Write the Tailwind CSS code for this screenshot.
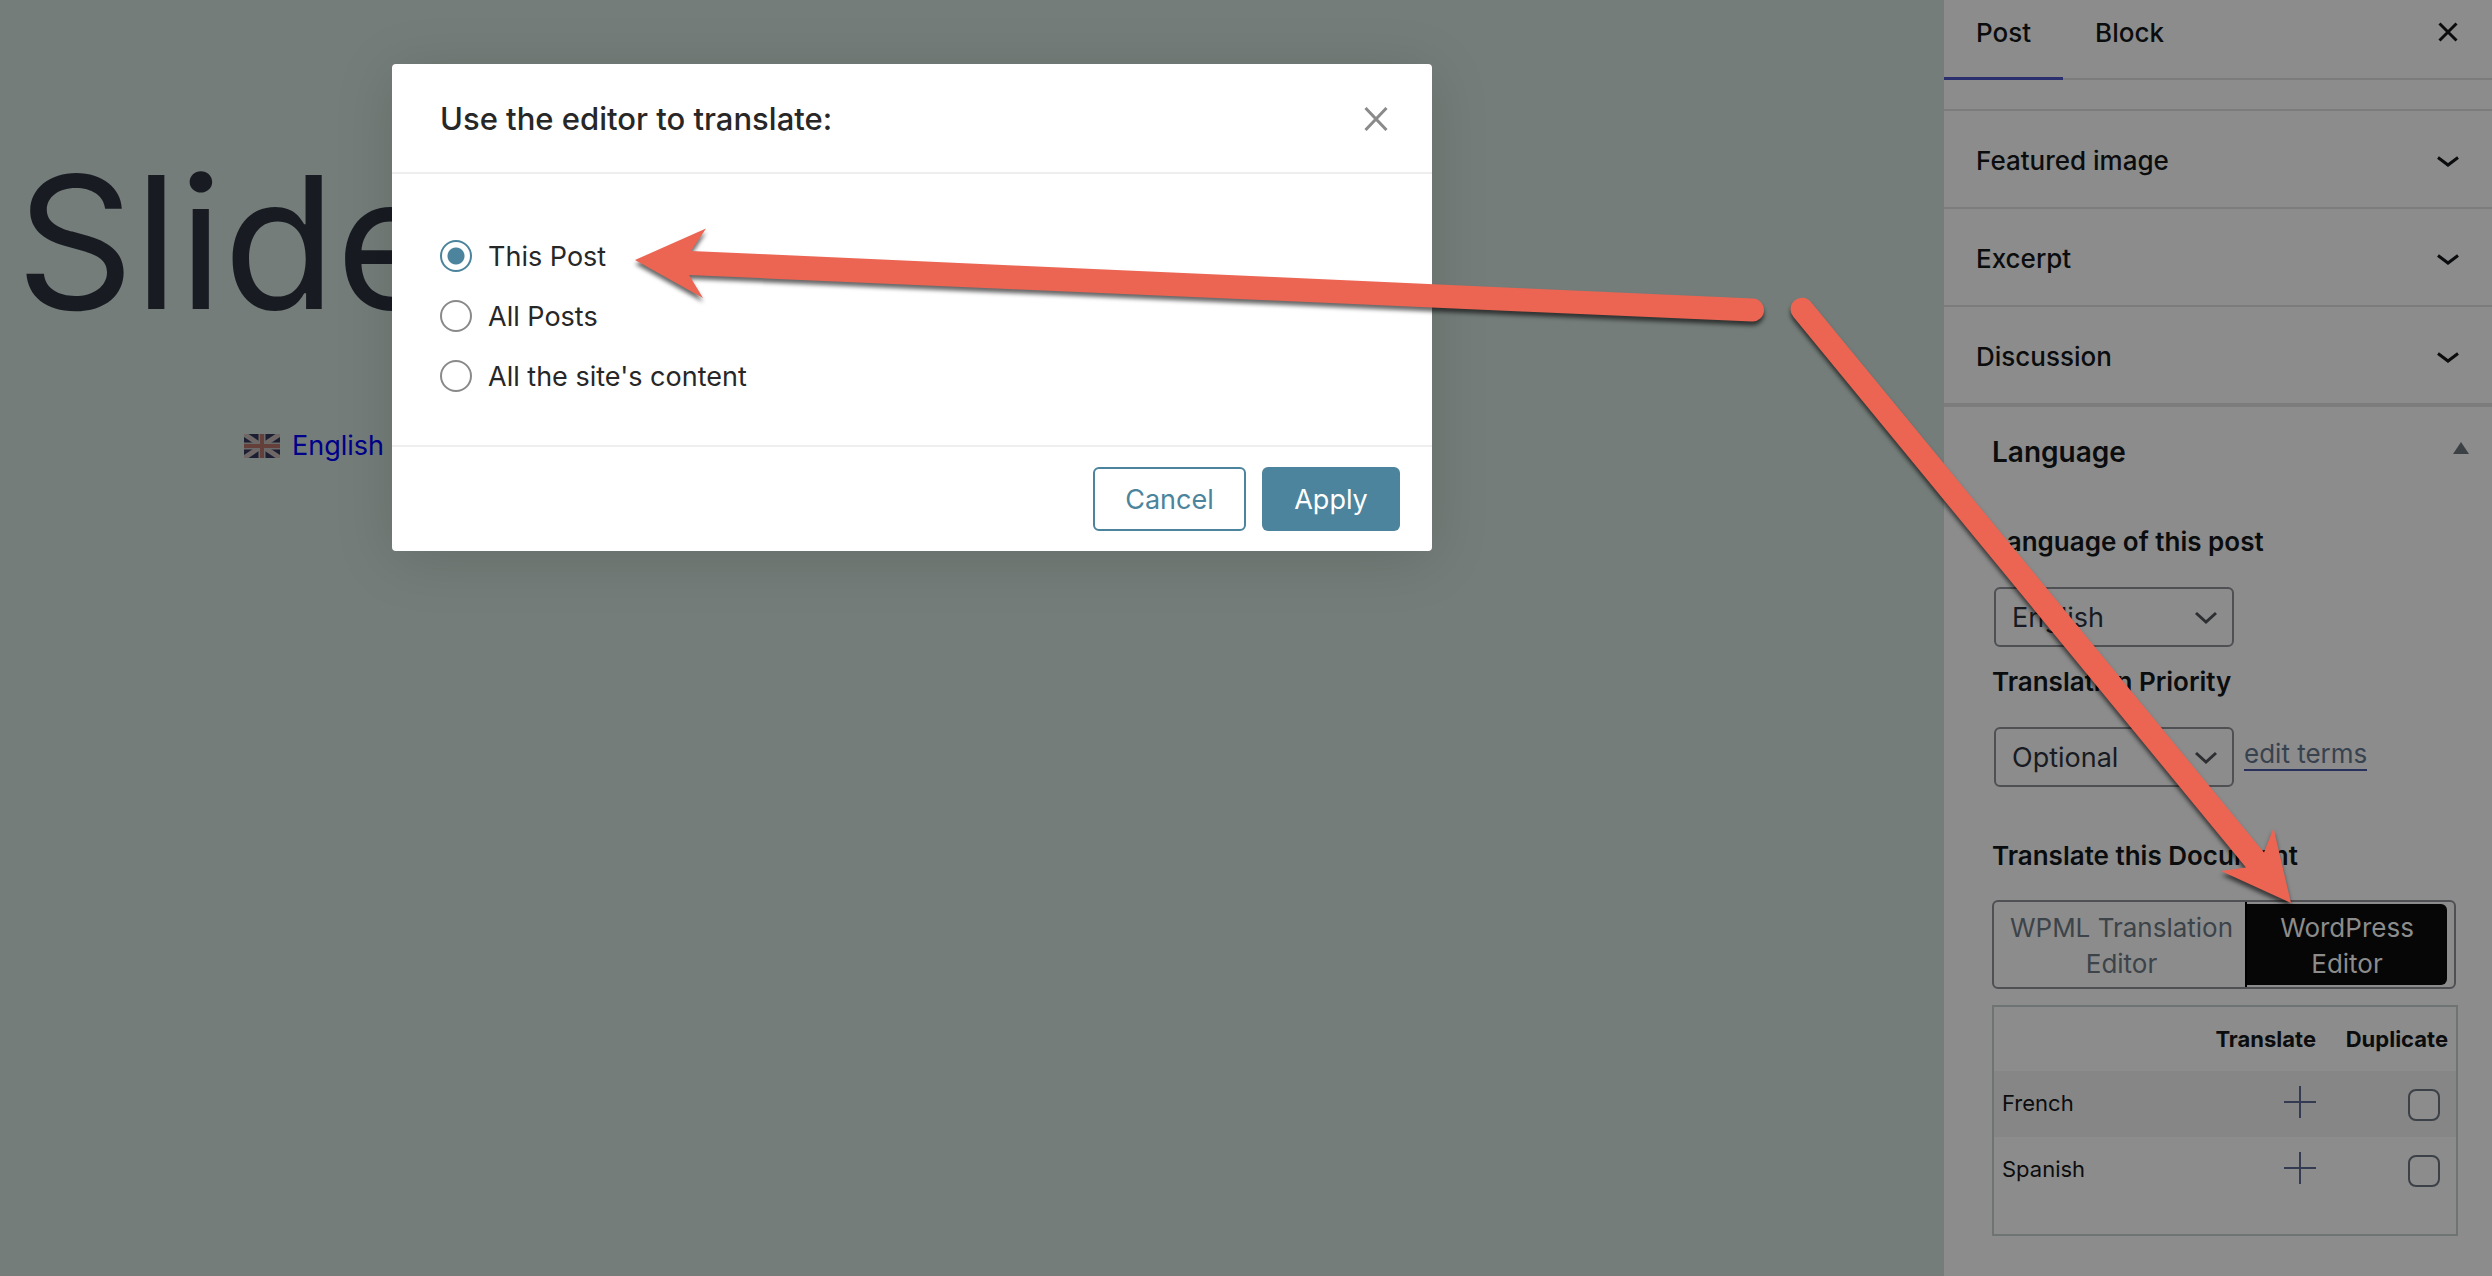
<!DOCTYPE html>
<html lang="en">
<head>
<meta charset="utf-8">
<title>Edit Post</title>
<script src="https://cdn.jsdelivr.net/npm/@tailwindcss/browser@4"></script>
</head>
<body class="relative flex min-h-screen overflow-x-hidden bg-[#747d79] font-[Inter,sans-serif] text-[#0b0c0e]">

<!-- Editor canvas -->
<main class="min-w-0 flex-1 pt-[130px]">
  <h1 class="pl-4 text-[184px] leading-[224px] text-[#181b22]">Slide</h1>
  <a href="#" class="mt-[72px] ml-[244px] flex w-fit items-center gap-3 text-[27px] leading-10 text-[#00008a]">
    <svg class="h-6 w-9" viewBox="0 0 36 24" aria-hidden="true">
      <rect width="36" height="24" fill="#1e1e32"/>
      <path d="M0 0L36 24M36 0L0 24" stroke="#6a6a6a" stroke-width="5"/>
      <path d="M0 0L36 24M36 0L0 24" stroke="#80605a" stroke-width="1"/>
      <path d="M18 0V24M0 12H36" stroke="#6a6a6a" stroke-width="7"/>
      <path d="M18 0V24M0 12H36" stroke="#653f3a" stroke-width="4"/>
    </svg>
    English
  </a>
</main>

<!-- Settings sidebar -->
<aside class="w-[548px] shrink-0 bg-[#8c8c8c]">
  <div class="flex h-20 border-b-2 border-[#7c7c7c] text-[26px] font-medium">
    <button class="-mb-[2px] h-20 border-b-[3px] border-[#2b2f6e] px-8 pb-3">Post</button>
    <button class="h-[78px] px-8 pb-[13px]">Block</button>
    <button class="mr-[34px] ml-auto pb-[14px]" aria-label="Close settings">
      <svg class="size-5" viewBox="0 0 20 20" fill="none" stroke="#0b0c0e" stroke-width="3"><path d="M1.500 1.500L18.500 18.500M18.500 1.500L1.500 18.500"/></svg>
    </button>
  </div>
  <div class="mt-[29px] text-[26px] font-medium">
    <button class="flex h-[98px] w-full items-center justify-between border-t-2 border-[#7c7c7c] pt-[2px] pr-8 pl-8">Featured image
      <svg class="mt-1 h-3 w-6" viewBox="0 0 24 12" fill="none" stroke="#0b0c0e" stroke-width="3"><path d="M2 1.500L12 9L22 1.500"/></svg></button>
    <button class="flex h-[98px] w-full items-center justify-between border-t-2 border-[#7c7c7c] pt-[2px] pr-8 pl-8">Excerpt
      <svg class="mt-1 h-3 w-6" viewBox="0 0 24 12" fill="none" stroke="#0b0c0e" stroke-width="3"><path d="M2 1.500L12 9L22 1.500"/></svg></button>
    <button class="flex h-[98px] w-full items-center justify-between border-t-2 border-[#7c7c7c] pt-[2px] pr-8 pl-8">Discussion
      <svg class="mt-1 h-3 w-6" viewBox="0 0 24 12" fill="none" stroke="#0b0c0e" stroke-width="3"><path d="M2 1.500L12 9L22 1.500"/></svg></button>
  </div>
  <section class="border-t-4 border-[#7c7c7c] pr-[34px] pl-12">
    <h2><button class="flex h-[90px] w-full items-center justify-between text-[28px] font-semibold">Language
      <svg class="-mr-[11px] mb-2 h-3 w-4" viewBox="0 0 16 12" fill="#3c4146"><path d="M8 0L16 12H0z"/></svg></button></h2>
    <label for="lang" class="mt-[25px] block text-[26px] leading-10 font-semibold">Language of this post</label>
    <div class="relative mt-[25px] ml-[2px] w-60">
      <select id="lang" class="h-[60px] w-full appearance-none rounded-md border-2 border-[#4e5053] pt-[2px] pl-4 text-[27px] text-[#181b22]"><option>English</option></select>
      <svg class="pointer-events-none absolute top-6 right-4 h-[14px] w-6" viewBox="0 0 24 14" fill="none" stroke="#2c2e31" stroke-width="3"><path d="M2 2L12 11L22 2"/></svg>
    </div>
    <label for="prio" class="mt-[15px] block text-[26px] leading-10 font-semibold">Translation Priority</label>
    <div class="mt-[25px] ml-[2px] flex items-center gap-[10px]">
      <div class="relative w-60">
        <select id="prio" class="block h-[60px] w-full appearance-none rounded-md border-2 border-[#4e5053] pt-[2px] pl-4 text-[27px] text-[#181b22]"><option>Optional</option></select>
        <svg class="pointer-events-none absolute top-6 right-4 h-[14px] w-6" viewBox="0 0 24 14" fill="none" stroke="#2c2e31" stroke-width="3"><path d="M2 2L12 11L22 2"/></svg>
      </div>
      <a href="#" class="mb-1 border-b-2 border-[#2a305c] text-[26px] leading-[30px] text-[#38424f]">edit terms</a>
    </div>
    <h3 class="mt-[49px] text-[26px] leading-10 font-semibold">Translate this Document</h3>
    <div class="mt-6 mr-[2px] flex h-[89px] rounded-md border-2 border-[#4e5053] text-[26px] leading-9">
      <button class="w-[251px] pt-[2px] pr-2 pl-3 text-[#3c4349]">WPML Translation Editor</button>
      <div class="mr-[7px] flex-1 border-l-2 border-black py-[2px]"><button class="h-full w-full rounded-r-md bg-[#060606] px-8 pt-[2px] text-[#8c8c8c]">WordPress Editor</button></div>
    </div>
    <div class="mt-4 h-[231px] border-2 border-[#6d7473]">
      <table class="w-full table-fixed text-[22px]">
        <thead><tr class="h-16">
          <th class="w-[174px]"></th>
          <th class="w-[148px] text-right font-bold">Translate</th>
          <th class="pr-2 text-right font-bold">Duplicate</th>
        </tr></thead>
        <tbody>
          <tr class="h-[66px] bg-[#868686]">
            <td class="pb-[2px] pl-2">French</td>
            <td><button class="mb-1 ml-auto block" aria-label="Translate to French"><svg class="size-8" viewBox="0 0 32 32" stroke="#343a52" stroke-width="2"><path d="M16 0V32M0 16H32"/></svg></button></td>
            <td class="pr-4"><input type="checkbox" aria-label="Duplicate to French" class="mt-[2px] ml-auto block size-8 appearance-none rounded-lg border-2 border-[#3b4147] bg-[#8c8c8c]"></td>
          </tr>
          <tr class="h-[66px]">
            <td class="pb-[2px] pl-2">Spanish</td>
            <td><button class="mb-1 ml-auto block" aria-label="Translate to Spanish"><svg class="size-8" viewBox="0 0 32 32" stroke="#343a52" stroke-width="2"><path d="M16 0V32M0 16H32"/></svg></button></td>
            <td class="pr-4"><input type="checkbox" aria-label="Duplicate to Spanish" class="mt-[2px] ml-auto block size-8 appearance-none rounded-lg border-2 border-[#3b4147] bg-[#8c8c8c]"></td>
          </tr>
        </tbody>
      </table>
    </div>
  </section>
</aside>

<!-- Dialog -->
<div role="dialog" aria-labelledby="dlg-title" class="absolute top-16 left-[392px] w-[1040px] rounded bg-white text-[27px] text-[#272727] shadow-[0_8px_60px_rgba(0,0,0,0.13)]">
  <header class="flex h-[110px] items-center justify-between border-b-2 border-[#eeeeee] pt-[2px] pr-11 pl-12">
    <h2 id="dlg-title" class="text-[31px] font-medium">Use the editor to translate:</h2>
    <button aria-label="Close">
      <svg class="size-6" viewBox="0 0 24 24" fill="none" stroke="#8a8a8a" stroke-width="3"><path d="M1.500 1L22.500 23M22.500 1L1.500 23"/></svg>
    </button>
  </header>
  <div class="flex flex-col gap-5 px-12 pt-[62px] pb-[49px] leading-9">
    <label class="flex h-10 items-center gap-4"><input type="radio" name="scope" checked class="size-8 appearance-none rounded-full border-2 border-[#8a8a8a] checked:border-[#4b849c] checked:bg-[radial-gradient(circle,#4b849c_8px,transparent_9px)]"><span class="pt-[2px]">This Post</span></label>
    <label class="flex h-10 items-center gap-4"><input type="radio" name="scope" class="size-8 appearance-none rounded-full border-2 border-[#8a8a8a]"><span class="pt-[2px]">All Posts</span></label>
    <label class="flex h-10 items-center gap-4"><input type="radio" name="scope" class="size-8 appearance-none rounded-full border-2 border-[#8a8a8a]"><span class="pt-[2px]">All the site's content</span></label>
  </div>
  <footer class="flex justify-end gap-4 border-t-2 border-[#eeeeee] px-8 py-5">
    <button class="h-16 w-[153px] rounded-md border-2 border-[#4b849c] pt-[2px] text-[#4b849c]">Cancel</button>
    <button class="h-16 w-[138px] rounded-md bg-[#4b849c] pt-[2px] text-white">Apply</button>
  </footer>
</div>

<!-- Annotation arrows -->
<svg class="pointer-events-none absolute top-0 left-0 h-[1276px] w-[2492px] drop-shadow-[0_4px_2px_rgba(0,0,0,0.6)]" viewBox="0 0 2492 1276" fill="#ec6553" aria-hidden="true">
  <path d="M635 260L706 228.500L691 251L1753 298.500A11.500 11.500 0 0 1 1752 321.500L689 275L703 298z"/>
  <path d="M2291 903L2221 871L2246 867.500L1793.500 317A11.500 11.500 0 0 1 1810.500 301.500L2264 852.500L2273.500 828z"/>
</svg>
</body>
</html>
